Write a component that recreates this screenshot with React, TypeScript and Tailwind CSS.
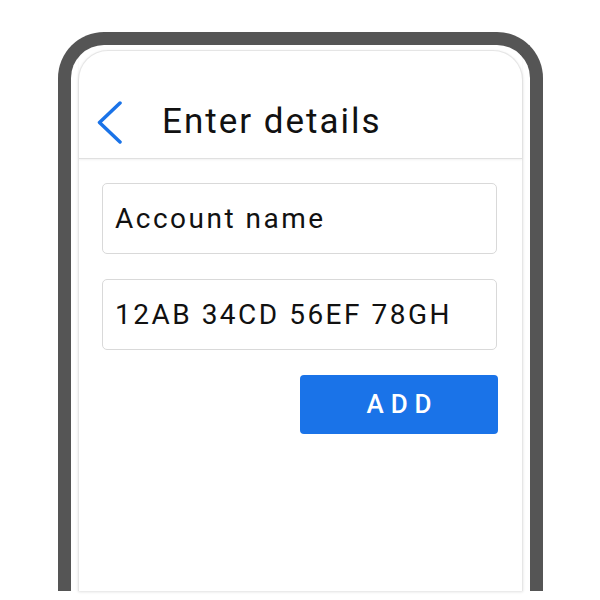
export default function App() {
  return (
    <div className="w-[600px] h-[600px] bg-white overflow-hidden" style={{ fontFamily: 'Roboto, "Liberation Sans", sans-serif' }}>
      <div className="ml-[58px] mt-[32px] w-[485px] h-[559px] border-[13px] border-b-0 border-[#555555] rounded-t-[46px] pt-[5px] px-[7px]">
        <div className="h-full bg-white rounded-t-[30px] border border-b-0 border-[#e6e6e6] shadow-[0_1px_3px_rgba(0,0,0,0.12)] flex flex-col">
          <div className="h-[108px] shrink-0 pt-[36px] flex items-center border-b border-[#e0e0e0] shadow-[0_1px_2px_rgba(0,0,0,0.06)]">
            <svg width="30" height="44" viewBox="0 0 30 44" className="ml-[17px]">
              <path d="M24 2 L3.5 21.5 L24 41" fill="none" stroke="#1a73e8" strokeWidth="3.5" strokeLinecap="round" strokeLinejoin="round" />
            </svg>
            <span className="ml-[36px] text-[35px] text-[#111] tracking-[2px]">Enter details</span>
          </div>
          <div className="pt-[24px] pl-[23px] pr-[25px] flex flex-col">
            <div className="h-[71px] border border-[#d9d9d9] rounded-[5px] flex items-center px-[12px] text-[28px] text-[#111] tracking-[2.5px]">
              Account name
            </div>
            <div className="mt-[25px] h-[71px] border border-[#d9d9d9] rounded-[5px] flex items-center px-[12px] text-[28px] text-[#111] tracking-[2.5px]">
              12AB 34CD 56EF 78GH
            </div>
            <div className="mt-[25px] flex justify-end -mr-[1px]">
              <button type="button" className="w-[198px] h-[59px] bg-[#1a73e8] rounded-[4px] text-white text-[26px] font-medium tracking-[7px] pl-[7px]">
                ADD
              </button>
            </div>
          </div>
        </div>
      </div>
    </div>
  );
}
